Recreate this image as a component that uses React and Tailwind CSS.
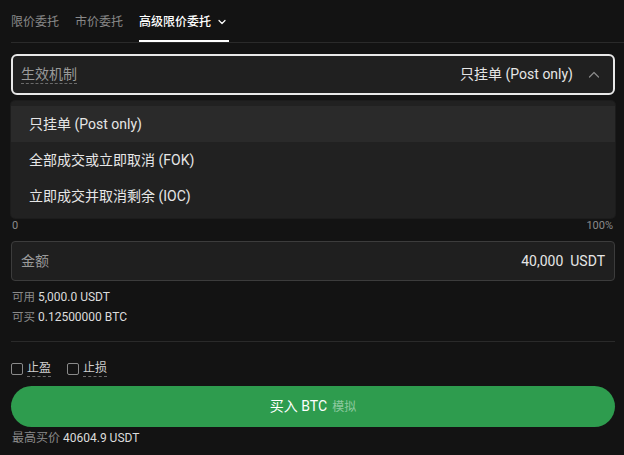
import React from "react";

const font = { fontFamily: 'Roboto, "Noto Sans CJK SC", sans-serif' };

function ChevronDown() {
  return (
    <svg width="10" height="10" viewBox="0 0 10 10" className="ml-[6px]">
      <path d="M2 3.5 L5 6.5 L8 3.5" fill="none" stroke="currentColor" strokeWidth="1.2" strokeLinecap="round" strokeLinejoin="round" />
    </svg>
  );
}

function ChevronUp() {
  return (
    <svg width="14" height="14" viewBox="0 0 14 14">
      <path d="M2.5 9 L7 4.5 L11.5 9" fill="none" stroke="#8a8a8a" strokeWidth="1.2" strokeLinecap="round" strokeLinejoin="round" />
    </svg>
  );
}

export default function App() {
  return (
    <div className="w-[624px] h-[455px] bg-[#131313] text-[#e6e6e6] overflow-hidden" style={font}>
      {/* Tabs */}
      <div className="ml-[11px] h-[43px] border-b border-[#2a2a2a] flex items-end gap-[16px]">
        <div className="h-full flex items-center text-[12px] text-[#8a8a8a] pt-[1px]">限价委托</div>
        <div className="h-full flex items-center text-[12px] text-[#8a8a8a] pt-[1px]">市价委托</div>
        <div className="relative h-full flex items-center text-[12px] text-white font-medium pt-[1px] pr-[2px]">
          高级限价委托
          <ChevronDown />
          <div className="absolute left-0 right-0 bottom-[0px] h-[2px] bg-white" />
        </div>
      </div>

      <div className="px-[11px] pr-[9px]">
        {/* Select */}
        <div className="mt-[11px] h-[41px] rounded-[6px] border-2 border-[#e8e8e8] bg-[#202020] flex items-center justify-between pl-[8px] pr-[12px]">
          <span className="text-[14px] text-[#9a9a9a] border-b border-dashed border-[#6a6a6a] leading-[18px]">生效机制</span>
          <span className="flex items-center gap-[14px] text-[14px] text-[#e6e6e6]">
            只挂单 (Post only)
            <ChevronUp />
          </span>
        </div>

        {/* Dropdown + slider labels */}
        <div className="relative mt-[6px] h-[140px]">
          <div className="absolute left-0 right-0 top-0 rounded-[4px] bg-[#212121] overflow-hidden pt-[5px] pb-[4px] shadow-[0_0_0_1px_#1c1c1c]">
            <div className="h-[36px] flex items-center pl-[18px] text-[14px] text-[#e6e6e6] bg-[#2a2a2a]">只挂单 (Post only)</div>
            <div className="h-[36px] flex items-center pl-[18px] text-[14px] text-[#e6e6e6]">全部成交或立即取消 (FOK)</div>
            <div className="h-[36px] flex items-center pl-[18px] text-[14px] text-[#e6e6e6]">立即成交并取消剩余 (IOC)</div>
          </div>
          <div className="absolute left-0 right-0 bottom-[10px] flex justify-between text-[11px] text-[#8a8a8a] leading-none pl-[1px] pr-[2px]">
            <span>0</span>
            <span>100%</span>
          </div>
        </div>

        {/* Amount */}
        <div className="h-[40px] rounded-[4px] border border-[#3c3c3c] bg-[#1f1f1f] flex items-center justify-between pl-[9px] pr-[9px]">
          <span className="text-[14px] text-[#9a9a9a]">金额</span>
          <span className="text-[14px] text-[#e6e6e6]">40,000&nbsp;&nbsp;USDT</span>
        </div>

        <div className="mt-[8px] flex flex-col gap-[4px] text-[12px] leading-[16px] pl-[1px]">
          <div><span className="text-[#8a8a8a] text-[11.5px]">可用</span> <span className="text-[#dcdcdc]">5,000.0 USDT</span></div>
          <div><span className="text-[#8a8a8a] text-[11.5px]">可买</span> <span className="text-[#dcdcdc]">0.12500000 BTC</span></div>
        </div>

        <div className="mt-[16px] border-t border-[#2a2a2a]" />

        {/* Checkboxes */}
        <div className="mt-[18px] flex items-center gap-[16px] text-[12px] text-[#cfcfcf]">
          <label className="flex items-center gap-[4px]">
            <span className="w-[12px] h-[12px] rounded-[2px] border border-[#8a8a8a]" />
            <span className="border-b border-dashed border-[#6a6a6a] leading-[16px]">止盈</span>
          </label>
          <label className="flex items-center gap-[4px]">
            <span className="w-[12px] h-[12px] rounded-[2px] border border-[#8a8a8a]" />
            <span className="border-b border-dashed border-[#6a6a6a] leading-[16px]">止损</span>
          </label>
        </div>

        {/* Buy button */}
        <div className="mt-[9px] h-[41px] rounded-full bg-[#2e9c4e] flex items-center justify-center gap-[5px]">
          <span className="text-[14px] text-white">买入 BTC</span>
          <span className="text-[12px] text-[#8fcaa0]">模拟</span>
        </div>

        <div className="mt-[3px] text-[12px] leading-[16px] pl-[1px]">
          <span className="text-[#8a8a8a]">最高买价</span> <span className="text-[#dcdcdc]">40604.9 USDT</span>
        </div>
      </div>
    </div>
  );
}
